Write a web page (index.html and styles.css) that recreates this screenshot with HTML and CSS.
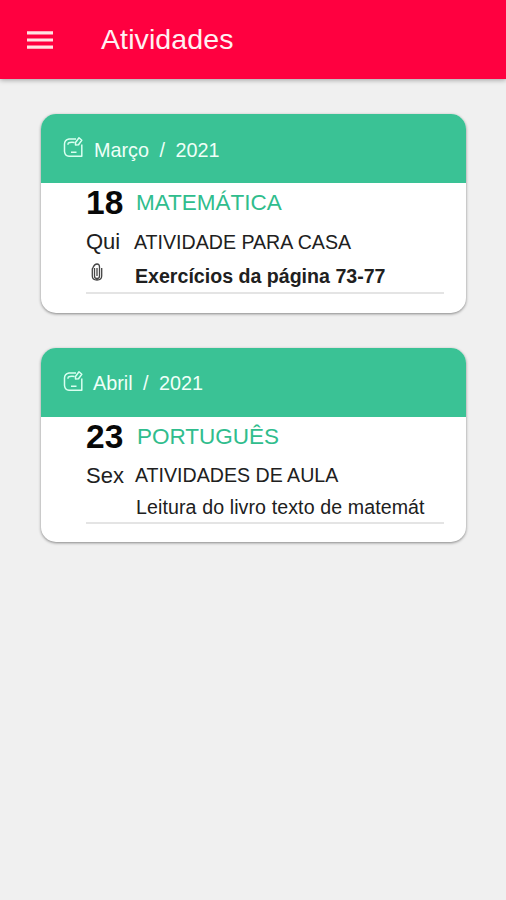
FILE: index.html
```html
<!DOCTYPE html>
<html lang="pt-BR">
<head>
<meta charset="utf-8">
<title>Atividades</title>
<link rel="stylesheet" href="styles.css">
</head>
<body>
<header class="appbar">
  <svg class="menu" viewBox="0 0 26 20" aria-hidden="true"><path d="M0 2.9h26M0 10h26M0 17.1h26"/></svg>
  <h1>Atividades</h1>
</header>
<main>
  <section class="card">
    <div class="card-head">
      <svg class="calendar" viewBox="0 0 20 22"><path d="M13 3H6Q1.500 4 1.500 8v7.500Q2 20 6 20.200H18.800V8.500M5 7.200Q8 5.500 11.500 6.500M5 7.200v1.500M8 16.300h5.500M12.500 6.500l3.500-4.700 2.800 2.500-3.300 4.400-3 .3z"/></svg>
      <span class="month">Março</span><span class="slash">/</span><span>2021</span>
    </div>
    <div class="entry">
      <div class="row top"><b class="day">18</b><span class="subject">MATEMÁTICA</span></div>
      <div class="row mid"><span class="weekday">Qui</span><span class="kind">ATIVIDADE PARA CASA</span></div>
      <div class="row end"><span class="clip-cell"><svg class="clip" viewBox="0 0 12 18"><path d="M3.500 5v8q0 2.500 2.500 2.500T8.500 13V4Q8.500 1 6 1T2 4.500L1.300 6v7Q1.300 17 6 17t4.700-4V5M6 5v8"/></svg></span><b class="detail">Exercícios da página 73-77</b></div>
    </div>
  </section>
  <section class="card second">
    <div class="card-head">
      <svg class="calendar" viewBox="0 0 20 22"><path d="M13 3H6Q1.500 4 1.500 8v7.500Q2 20 6 20.200H18.800V8.500M5 7.200Q8 5.500 11.500 6.500M5 7.200v1.500M8 16.300h5.500M12.500 6.500l3.500-4.700 2.800 2.500-3.300 4.400-3 .3z"/></svg>
      <span class="month">Abril</span><span class="slash">/</span><span>2021</span>
    </div>
    <div class="entry">
      <div class="row top"><b class="day">23</b><span class="subject">PORTUGUÊS</span></div>
      <div class="row mid"><span class="weekday">Sex</span><span class="kind">ATIVIDADES DE AULA</span></div>
      <div class="row end"><span class="clip-cell"></span><span class="detail">Leitura do livro texto de matemát</span></div>
    </div>
  </section>
</main>
</body>
</html>
```
FILE: styles.css
```css
* { box-sizing: border-box; }
body {
  margin: 0;
  min-height: 900px;
  background: #f0f0f0;
  color: #202020;
  font-family: "Liberation Sans", Arial, sans-serif;
}
.appbar {
  display: flex;
  align-items: center;
  height: 79px;
  padding: 0 0 0 27px;
  background: #ff0040;
  color: #fff0f2;
  box-shadow: 0 1px 5px rgba(0, 0, 0, .35);
}
.menu {
  width: 26px;
  height: 20px;
  fill: none;
  stroke: #ffe3e3;
  stroke-width: 3.2;
}
h1 {
  margin: 0 0 0 48px;
  font-size: 28.5px;
  font-weight: 400;
  letter-spacing: .1px;
}
main { padding: 35px 40px 0 41px; }
.card {
  height: 199px;
  overflow: hidden;
  border-radius: 15px;
  background: #fff;
  box-shadow: 0 1px 3px rgba(0, 0, 0, .45);
}
.card.second { height: 194px; margin-top: 35px; }
.card-head {
  display: flex;
  align-items: center;
  height: 69px;
  padding: 3px 0 0 22px;
  background: #3ac295;
  color: #effff8;
  font-size: 19.8px;
}
.second .card-head { padding-top: 2px; }
.calendar {
  width: 20px;
  height: 22px;
  margin-top: -6px;
  fill: none;
  stroke: #d9fff0;
  stroke-width: 1.5;
  stroke-linejoin: round;
}
.month { margin-left: 11px; }
.second .month { margin-left: 10px; }
.slash { margin: 0 10.5px; }
.entry {
  margin: 0 22px 0 45px;
  border-bottom: 2px solid #e4e4e4;
}
.row {
  display: flex;
  white-space: nowrap;
}
.top { height: 40px; line-height: 40px; }
.mid { height: 38px; line-height: 38px; }
.end { height: 31px; line-height: 31px; }
.second .mid { height: 37px; line-height: 37px; }
.second .end { height: 28px; line-height: 27px; }
.day {
  width: 50px;
  color: #080808;
  font-size: 33.5px;
}
.subject { color: #30bd8d; font-size: 22.5px; line-height: 40px; }
.second .subject { margin-left: 1px; }
.weekday { width: 48px; font-size: 22px; }
.kind { font-size: 19.6px; }
.second .kind { margin-left: 1px; }
.clip-cell { width: 49px; }
.clip {
  display: block;
  width: 12px;
  height: 18px;
  margin: 2px 0 0 5px;
  fill: none;
  stroke: #444;
  stroke-width: 1.3;
}
.detail { font-size: 19.6px; }
.second .detail { margin-left: 1px; letter-spacing: .1px; }
```
